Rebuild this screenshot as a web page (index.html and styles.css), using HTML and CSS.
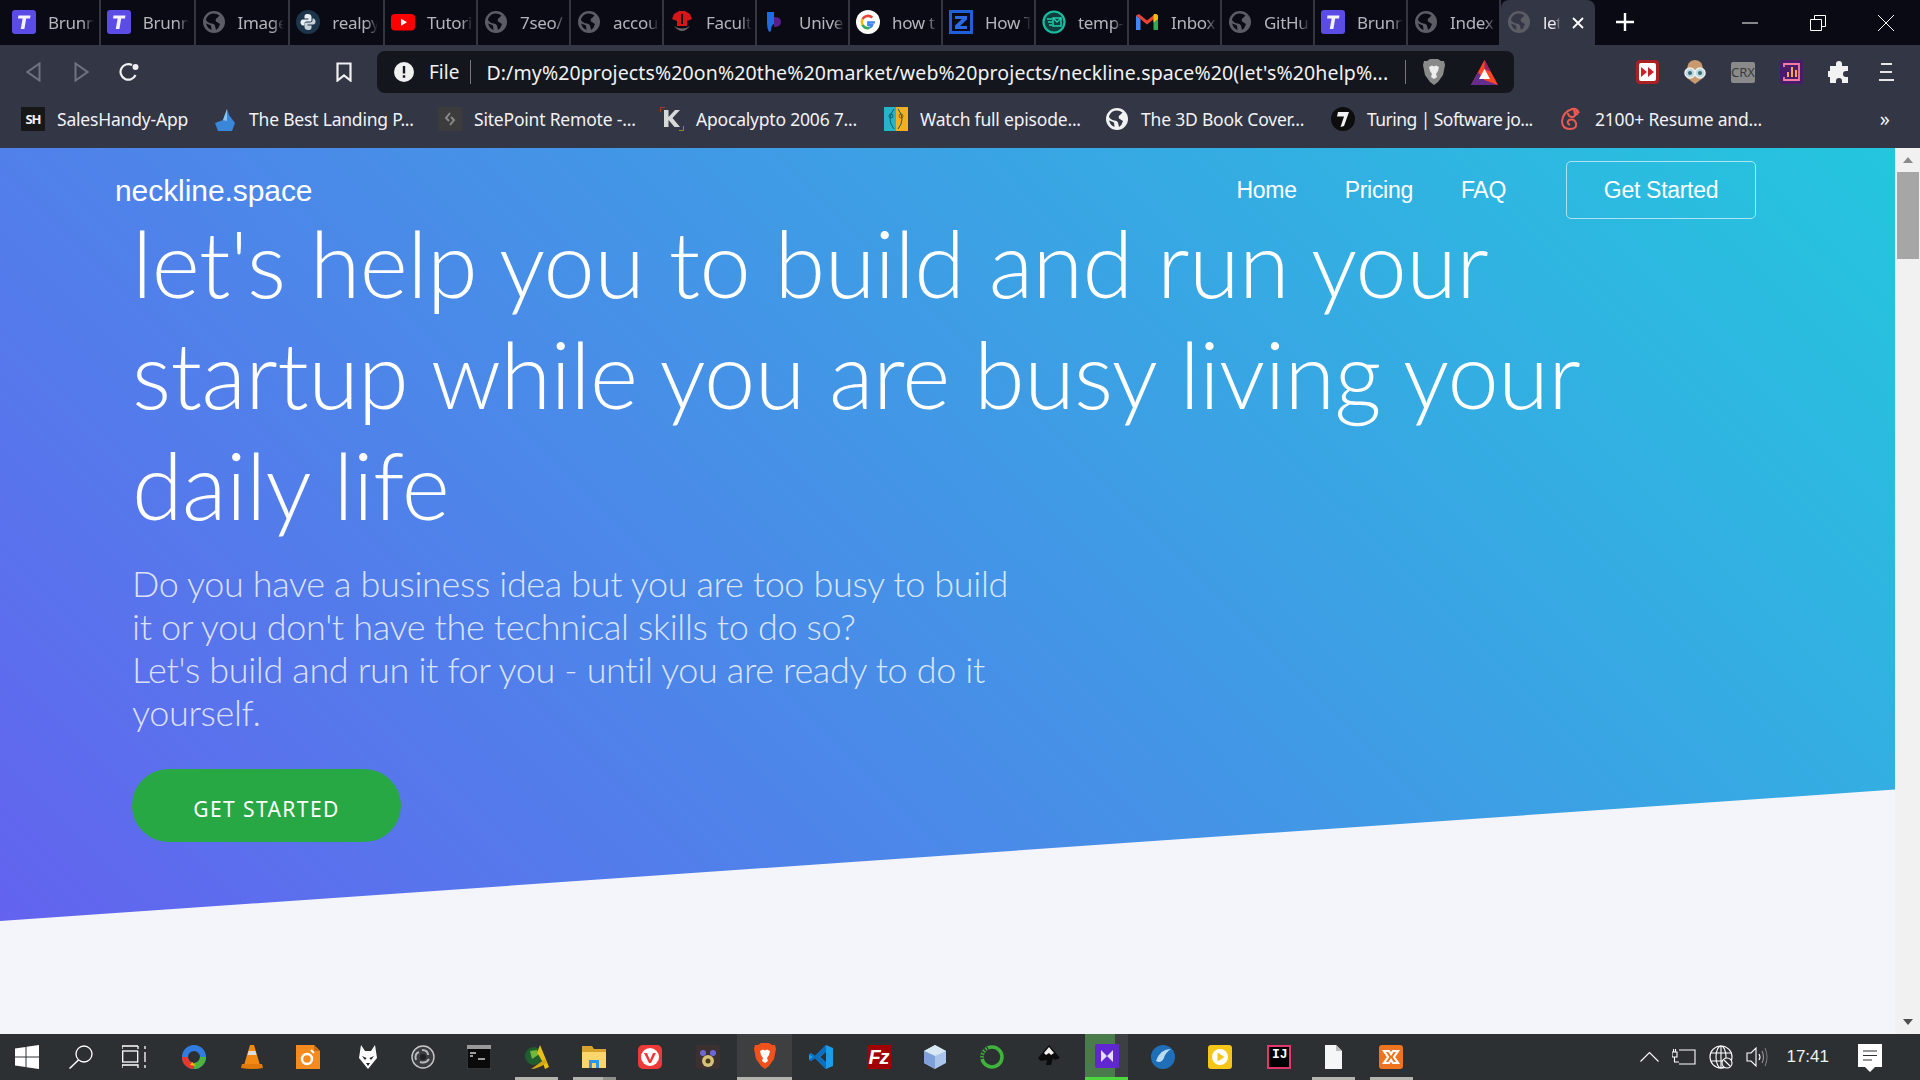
FILE: index.html
```html
<!DOCTYPE html>
<html lang="en">
<head>
  <meta charset="UTF-8" />
  <title>neckline.space</title>
  <link rel="stylesheet" href="styles.css">
</head>
<body>

<svg class="defs" width="0" height="0">
  <symbol id="globe" viewBox="0 0 24 24">
    <path fill-rule="evenodd" d="M12 1a11 11 0 1 0 0 22 11 11 0 0 0 0-22ZM9.500 3.800Q14 3 17.500 5.500L15 8Q13 9 14 11.500L18 14Q17 18 14 20L13 15.500Q12 13.500 9.500 13.500 5 12.500 3.900 9.500 5.500 5 9.500 3.800ZM4 13.500Q7 14.500 9 15.500L9.500 20Q5.500 18.500 4 13.500Z" fill="currentColor"/>
  </symbol>
  <symbol id="tlogo" viewBox="0 0 24 24">
    <rect width="24" height="24" rx="3" fill="#5c4ce6"/>
    <path d="M6.5 5.5H18.5L18 8.5H14.2L12.4 19H8.8L10.6 8.5H6Z" fill="#f4f2ff"/>
  </symbol>
</svg>

<div class="tabstrip">
  <div class="tab"><svg class="tab-icon"><use href="#tlogo"/></svg><span class="tab-title">Brunn</span></div>
  <div class="tab"><svg class="tab-icon"><use href="#tlogo"/></svg><span class="tab-title">Brunn</span></div>
  <div class="tab"><svg class="tab-icon globe"><use href="#globe"/></svg><span class="tab-title">Image</span></div>
  <div class="tab">
    <svg class="tab-icon" viewBox="0 0 24 24"><circle cx="12" cy="12" r="12" fill="#1d3549"/><path d="M12 4C8.5 4 8.5 5.500 8.500 7V8.500H12.500V9.500H7C5 9.500 4.500 11 4.500 12.500S5.500 15.500 7 15.500H8.500V13.500C8.500 12 9.500 11.500 11 11.500H14C15 11.500 15.500 11 15.500 10V7C15.500 5 14 4 12 4Z" fill="#e8eef2"/><path d="M12 20C15.500 20 15.500 18.500 15.500 17V15.500H11.500V14.500H17C19 14.500 19.500 13 19.500 11.500S18.500 8.500 17 8.500H16.500V10.500C16.500 12 14.500 12.500 13 12.500H10C9 12.500 8.500 13 8.500 14V17C8.500 19 10 20 12 20Z" fill="#c7d3db"/></svg>
    <span class="tab-title">realpy</span>
  </div>
  <div class="tab">
    <svg class="tab-icon" viewBox="0 0 24 24"><rect x="0" y="4" width="24" height="16.500" rx="4" fill="#f00"/><path d="M10 8.700 16 12.200 10 15.700Z" fill="#fff"/></svg>
    <span class="tab-title">Tutori</span>
  </div>
  <div class="tab"><svg class="tab-icon globe"><use href="#globe"/></svg><span class="tab-title">7seo/</span></div>
  <div class="tab"><svg class="tab-icon globe"><use href="#globe"/></svg><span class="tab-title">accou</span></div>
  <div class="tab">
    <svg class="tab-icon" viewBox="0 0 24 24"><path d="M4 4 9 1H15L20 4 22 9 17 11V16H7V11L2 9Z" fill="#d5161b"/><path d="M11 4H13V14H11Z" fill="#111"/><path d="M4 16Q12 26 20 16Q12 21 4 16Z" fill="#666"/></svg>
    <span class="tab-title">Facult</span>
  </div>
  <div class="tab">
    <svg class="tab-icon" viewBox="0 0 24 24"><path d="M4 2H11V14Q8 15 8 21L6 22Q4 18 4 14Z" fill="#1f6be0"/><path d="M11 7Q18 7 18 12T11 17Z" fill="#5a1e8c"/></svg>
    <span class="tab-title">Unive</span>
  </div>
  <div class="tab">
    <svg class="tab-icon" viewBox="0 0 24 24"><circle cx="12" cy="12" r="12" fill="#fff"/><path d="M19 12.300H12.200V14.800H16.300C15.800 16.800 14.200 17.800 12.200 17.800" fill="none" stroke="#4285f4" stroke-width="2.200"/><path d="M6.500 9.200A6.300 6.300 0 0 1 16.300 7.600" fill="none" stroke="#ea4335" stroke-width="2.600"/><path d="M6.500 9.200A6.300 6.300 0 0 0 6.500 14.900" fill="none" stroke="#fbbc05" stroke-width="2.600"/><path d="M6.500 14.900A6.300 6.300 0 0 0 13 18" fill="none" stroke="#34a853" stroke-width="2.600"/></svg>
    <span class="tab-title">how t</span>
  </div>
  <div class="tab">
    <svg class="tab-icon" viewBox="0 0 24 24"><path d="M0 0H24V24H0Z" fill="#1f5fd8"/><path d="M3 3H21V21H3Z" fill="#0a0b16"/><path d="M6 6H18V9.500L11 16H18V19H6V15.500L13 9H6Z" fill="#2a6ae8"/></svg>
    <span class="tab-title">How T</span>
  </div>
  <div class="tab">
    <svg class="tab-icon" viewBox="0 0 24 24"><circle cx="12" cy="12" r="10.500" fill="#103e3c" stroke="#17bfa0" stroke-width="2.200"/><path d="M5 9H10M6 12H10M7 15H10" stroke="#1fd0ae" stroke-width="1.500"/><rect x="11" y="8" width="8" height="8" fill="none" stroke="#1fd0ae" stroke-width="1.500"/><path d="M11 8 15 12 19 8" fill="none" stroke="#1fd0ae" stroke-width="1.300"/></svg>
    <span class="tab-title">temp-</span>
  </div>
  <div class="tab">
    <svg class="tab-icon" viewBox="0 0 24 24"><path d="M1 5.500V20H5.500V9Z" fill="#4285f4"/><path d="M23 5.500V20H18.500V9Z" fill="#34a853"/><path d="M1 5.500 4 4 12 10.500 20 4 23 5.500 12 14.500Z" fill="#ea4335"/><path d="M19 4H21.500L23 5.500V9L18.500 12.500V5Z" fill="#fbbc05"/></svg>
    <span class="tab-title">Inbox</span>
  </div>
  <div class="tab"><svg class="tab-icon globe"><use href="#globe"/></svg><span class="tab-title">GitHu</span></div>
  <div class="tab"><svg class="tab-icon"><use href="#tlogo"/></svg><span class="tab-title">Brunn</span></div>
  <div class="tab"><svg class="tab-icon globe"><use href="#globe"/></svg><span class="tab-title">Index</span></div>
  <div class="tab tab-active">
    <svg class="tab-icon globe"><use href="#globe"/></svg><span class="tab-title">let's</span>
    <svg class="tab-close" viewBox="0 0 12 12"><path d="M1 1 11 11M11 1 1 11" stroke="#fff" stroke-width="1.800"/></svg>
  </div>
  <svg class="new-tab" viewBox="0 0 18 18"><path d="M9 0V18M0 9H18" stroke="#fff" stroke-width="2.400"/></svg>
  <div class="window-btns">
    <svg viewBox="0 0 16 16" width="16" height="16"><path d="M0 8H16" stroke="#fff"/></svg>
    <svg viewBox="0 0 16 16" width="16" height="16"><path d="M.5 4.500H11.500V15.500H.5ZM4.500 4.500V.5H15.500V11.500H11.500" fill="none" stroke="#fff"/></svg>
    <svg viewBox="0 0 16 16" width="16" height="16"><path d="M0 0 16 16M16 0 0 16" stroke="#fff"/></svg>
  </div>
</div>

<div class="toolbar">
  <div class="nav-btns">
    <svg viewBox="0 0 15 20" width="15" height="20"><path d="M13.500 1.500V18.500L1.500 10Z" fill="none" stroke="#70737e" stroke-width="2"/></svg>
    <svg viewBox="0 0 15 20" width="15" height="20"><path d="M1.500 1.500V18.500L13.500 10Z" fill="none" stroke="#70737e" stroke-width="2"/></svg>
    <svg viewBox="0 0 20 20" width="20" height="20"><path d="M16.500 13A7.800 7.800 0 1 1 13 3" fill="none" stroke="#f0f0f0" stroke-width="2.200"/><circle cx="16.500" cy="5" r="3" fill="#f0f0f0"/></svg>
  </div>
  <svg class="bookmark-btn" viewBox="0 0 16 20" width="16" height="20"><path d="M1.500 1.500H14.500V18.500L8 13.500 1.500 18.500Z" fill="none" stroke="#f0f0f0" stroke-width="2.200"/></svg>
  <div class="addressbar">
    <svg class="alert-icon" viewBox="0 0 20 20" width="20" height="20"><circle cx="10" cy="10" r="10" fill="#f0f0f0"/><path d="M8.800 4H11.200V11.500H8.800ZM8.800 13.300H11.200V15.800H8.800Z" fill="#14161e"/></svg>
    <span class="scheme">File</span>
    <span class="address-sep"></span>
    <span class="url">D:/my%20projects%20on%20the%20market/web%20projects/neckline.space%20(let's%20help%...</span>
    <span class="address-sep sep-right"></span>
    <svg class="brave-shield" viewBox="0 0 22 26" width="22" height="26"><path d="M4 2 7 0H15L18 2 21 2 22 6 20 16 15 23 11 26 7 23 2 16 0 6 1 2Z" fill="#8a8a8a"/><path d="M6 8 9 6.500 11 7.500 13 6.500 16 8 15 12 13 15 14 18 11 20 8 18 9 15 7 12Z" fill="#eee"/></svg>
    <svg class="bat-icon" viewBox="0 0 27 25" width="27" height="25"><path d="M13.500 0 27 25H0Z" fill="#ff4724"/><path d="M13.500 0 20 12 13.500 9Z" fill="#9e1f63"/><path d="M0 25 7 12 13.500 20 27 25Z" fill="#662d91"/><path d="M13.500 9 19 19H8Z" fill="#fff"/></svg>
  </div>
  <div class="extensions">
    <svg viewBox="0 0 23 24" width="23" height="24"><rect width="23" height="24" rx="4" fill="#a92025"/><rect x="3" y="3" width="17" height="18" rx="2" fill="#fff"/><path d="M5 7 11 12 5 17ZM12 7 18 12 12 17Z" fill="#c8232a"/></svg>
    <svg viewBox="0 0 22 24" width="22" height="24"><path d="M3 11Q3 0 11 0T19 11V18L11 24 3 18Z" fill="#c99a6e"/><circle cx="6" cy="13" r="5" fill="#bcd9dd" stroke="#eee" stroke-width="1.500"/><circle cx="16" cy="13" r="5" fill="#bcd9dd" stroke="#eee" stroke-width="1.500"/><circle cx="6" cy="13" r="2" fill="#3b6b78"/><circle cx="16" cy="13" r="2" fill="#3b6b78"/></svg>
    <span class="crx">CRX</span>
    <svg viewBox="0 0 23 24" width="23" height="24"><rect width="23" height="24" rx="3" fill="#4c1a6b"/><path d="M4 7V4H19V20H4V17" fill="none" stroke="#f07ca6" stroke-width="1.800"/><path d="M8 17V12M12 17V7M16 17V10" stroke="#f4a65c" stroke-width="2"/></svg>
    <svg viewBox="0 0 22 22" width="22" height="22"><path d="M8 3A3 3 0 0 1 14 3V5H20V10H18A3 3 0 0 0 18 16H20V22H14V20A3 3 0 0 0 8 20V22H2V16H0A3 3 0 0 1 0 10H2V5H8Z" fill="#f2f2f2"/></svg>
    <svg class="menu-btn" viewBox="0 0 15 20" width="15" height="20"><path d="M2 2H13M1 10H13M0 18H15" stroke="#e6e6e6" stroke-width="2.200"/></svg>
  </div>
</div>

<div class="bookmarks">
  <div class="bm bm-first"><span class="bm-box sh">SH</span><span>SalesHandy-App</span></div>
  <div class="bm bm-a">
    <svg viewBox="0 0 20 24" width="20" height="24"><path d="M0 16 8 13 12 2 14 8 20 16 17 24H3Z" fill="#3a87da"/><path d="M8 13 12 2 12 14Z" fill="#8cc2f2"/></svg>
    <span>The Best Landing P...</span>
  </div>
  <div class="bm bm-b">
    <svg viewBox="0 0 24 24" width="24" height="24"><rect width="24" height="24" fill="#3c3c3c"/><path d="M12 6 8 11 11 14M13 10 16 13 12 18" fill="none" stroke="#8a8a8a" stroke-width="2"/></svg>
    <span>SitePoint Remote -...</span>
  </div>
  <div class="bm bm-c">
    <svg viewBox="0 0 24 24" width="24" height="24"><path d="M.5 5V.5H5" fill="none" stroke="#b53028"/><path d="M23.500 19V23.500H19" fill="none" stroke="#8f8b2c"/><path d="M4 3H8.500V10L15 3H20L12.500 11 20 20H14.500L8.500 13V20H4Z" fill="#d8d8d8"/></svg>
    <span>Apocalypto 2006 7...</span>
  </div>
  <div class="bm bm-d">
    <svg viewBox="0 0 24 24" width="24" height="24"><rect width="12" height="24" fill="#27b4c8"/><rect x="12" width="12" height="24" fill="#f4b01e"/><circle cx="7" cy="9" r="2" fill="none" stroke="#0c5f70"/><circle cx="17" cy="9" r="2" fill="none" stroke="#8a5e00"/><path d="M10 2Q2 12 10 22M14 2Q22 12 14 22" fill="none" stroke="#0c5f70"/></svg>
    <span>Watch full episode...</span>
  </div>
  <div class="bm bm-e"><svg class="bm-globe"><use href="#globe"/></svg><span>The 3D Book Cover...</span></div>
  <div class="bm bm-f">
    <svg viewBox="0 0 24 24" width="24" height="24"><circle cx="12" cy="12" r="12" fill="#0d0d0d"/><path d="M7 5H18L13 19 9.500 20 13 9.500H6Z" fill="#f2f2f2"/></svg>
    <span>Turing | Software jo...</span>
  </div>
  <div class="bm bm-g">
    <svg viewBox="0 0 22 24" width="22" height="24" fill="none" stroke="#ea5a52" stroke-width="2"><path d="M19 6Q17 1 12 2 3 5 2 14 2 22 10 22 17 22 16 16 14 11 9 13 6 16 10 18"/><path d="M13 2Q18 8 13 10 8 10 8 6"/><circle cx="16" cy="6" r="1.500"/></svg>
    <span>2100+ Resume and...</span>
  </div>
  <span class="bm-more">»</span>
</div>

<div class="viewport">
  <main class="page">
    <section class="hero">
      <nav class="topnav">
        <a class="brand">neckline.space</a>
        <div class="nav-links">
          <a>Home</a>
          <a>Pricing</a>
          <a>FAQ</a>
          <a class="nav-cta">Get Started</a>
        </div>
      </nav>
      <div class="hero-body">
        <h1>let's help you to build and run your startup while you are busy living your daily life</h1>
        <p>Do you have a business idea but you are too busy to build it or you don't have the technical skills to do so?<br>Let's build and run it for you - until you are ready to do it yourself.</p>
        <a class="hero-btn">GET STARTED</a>
      </div>
    </section>
  </main>
  <div class="scrollbar">
    <svg class="arrow" viewBox="0 0 10 6" width="10" height="6"><path d="M5 0 10 6H0Z" fill="#8a8a8a"/></svg>
    <div class="thumb"></div>
    <svg class="arrow arrow-down" viewBox="0 0 10 6" width="10" height="6"><path d="M5 6 10 0H0Z" fill="#505050"/></svg>
  </div>
</div>

<footer class="taskbar">
  <svg class="tb-win" viewBox="0 0 24 24" width="24" height="24"><path d="M0 3.500 10.500 2V11.500H0ZM11.500 1.800 24 0V11.500H11.500ZM0 12.500H10.500V22L0 20.500ZM11.500 12.500H24V24L11.500 22.200Z" fill="#fff"/></svg>
  <svg class="tb-search" viewBox="0 0 24 24" width="24" height="24"><circle cx="15" cy="9" r="8" fill="none" stroke="#fff" stroke-width="1.300"/><path d="M9.500 15 .5 23.500" stroke="#fff" stroke-width="1.500"/></svg>
  <svg class="tb-view" viewBox="0 0 25 24" width="25" height="24" fill="none" stroke="#fff" stroke-width="1.300"><path d="M0 4V1M16 1V4M0 1H16"/><rect x=".7" y="6" width="15" height="11"/><path d="M0 23V20H16V23M23 1V4M23 7V17M23 20V23"/></svg>
  <svg class="tb-a" viewBox="0 0 24 24" width="24" height="24"><circle cx="12" cy="12" r="9" fill="none" stroke="#2f7de1" stroke-width="6"/><path d="M3 12A9 9 0 0 0 12 21" fill="none" stroke="#e8372c" stroke-width="6"/><path d="M12 21A9 9 0 0 0 21 12" fill="none" stroke="#4db33d" stroke-width="6"/><path d="M8 20 14 21 10 17Z" fill="#fbbc05"/></svg>
  <svg class="tb-b" viewBox="0 0 22 24" width="22" height="24"><path d="M9 0H13L19 20H3Z" fill="#f08a12"/><path d="M7.600 6H14.400L15.500 10H6.500Z" fill="#ddd"/><path d="M1 19H21L22 23Q11 25 0 23Z" fill="#e07b0a"/></svg>
  <svg class="tb-c" viewBox="0 0 24 24" width="24" height="24"><path d="M0 0H18L24 6V24H0Z" fill="#f58a1f"/><path d="M18 0 24 6H18Z" fill="#c66f15"/><circle cx="11" cy="14" r="5" fill="none" stroke="#fff" stroke-width="2.500"/><path d="M15 5 18 8" stroke="#fff" stroke-width="2"/></svg>
  <svg class="tb-d" viewBox="0 0 24 24" width="24" height="24"><path d="M5 0 9 6H15L19 0 21 13 12 24 3 13Z" fill="#fff"/><path d="M6 11 10.500 13 9 15ZM18 11 13.500 13 15 15ZM10 18H14L12 21Z" fill="#222"/></svg>
  <svg class="tb-e" viewBox="0 0 24 24" width="24" height="24"><circle cx="12" cy="12" r="11" fill="#3a3d3f" stroke="#c8c8c8" stroke-width="1.400"/><path d="M11 5Q17 5 17 10M18 14Q15 19 9 17M5 15Q3 9 8 7" fill="none" stroke="#b8b8b8" stroke-width="2"/><circle cx="12" cy="12" r="3" fill="#1e2022"/></svg>
  <svg class="tb-f" viewBox="0 0 24 24" width="24" height="24"><rect width="24" height="24" fill="#0a0a0a" stroke="#5c5c5c"/><rect width="24" height="4" fill="#9a9a9a"/><path d="M3 8H9M3 11H6M11 14H18" stroke="#d0d0d0" stroke-width="1.500"/></svg>
  <span class="tb-slot tb-open tb-g"><svg viewBox="0 0 24 24" width="24" height="24"><circle cx="9" cy="11" r="9" fill="#1f5f2f"/><path d="M5 6 12 5 13 10 7 14Z" fill="#6fba3d"/><path d="M15 0Q20 12 24 22L20 24Q17 14 12 8Z" fill="#e8c018"/><path d="M6 24Q12 20 20 14L22 18Q12 24 6 24Z" fill="#d8a810"/></svg></span>
  <span class="tb-slot tb-open tb-stacked tb-h"><svg viewBox="0 0 24 24" width="24" height="24"><path d="M0 1H10L12 4H24V8H0Z" fill="#d8a32c"/><path d="M0 7H24V23H0Z" fill="#fbd66a"/><path d="M7 23V15H17V23H14V18H10V23Z" fill="#2e96e6"/></svg></span>
  <span class="tb-slot tb-i"><svg viewBox="0 0 24 24" width="24" height="24"><rect width="24" height="24" rx="5" fill="#ef3939"/><circle cx="12" cy="12" r="9" fill="#fff"/><path d="M6 8H9L12 15 15 8H18L13 18H11Z" fill="#ef3939"/></svg></span>
  <svg class="tb-j" viewBox="0 0 24 24" width="24" height="24"><rect width="24" height="24" rx="3" fill="#3d3030"/><circle cx="7" cy="8" r="3" fill="#6d68d8"/><circle cx="17" cy="8" r="3" fill="#6d68d8"/><circle cx="12" cy="16" r="6" fill="#d6c27a"/><circle cx="12" cy="16" r="2.500" fill="#4a3a18"/></svg>
  <span class="tb-active-brave"><svg viewBox="0 0 22 26" width="22" height="26"><path d="M4 2 7 0H15L18 2 21 2 22 6 20 16 15 23 11 26 7 23 2 16 0 6 1 2Z" fill="#f1511b"/><path d="M6 8 9 6.500 11 7.500 13 6.500 16 8 15 12 13 15 14 18 11 20 8 18 9 15 7 12Z" fill="#fff"/></svg></span>
  <svg class="tb-k" viewBox="0 0 24 24" width="24" height="24"><path d="M17 0 24 3V21L17 24 6 13 2 16 0 14.500V9.500L2 8 6 11Z" fill="#1f9ce8"/><path d="M17 0V7L10 12 17 17V24L6 13 2 16 0 14.500 4 12 0 9.500 2 8 6 11Z" fill="#0a6fc0"/><path d="M17 7 11 12 17 17Z" fill="#2d3033"/></svg>
  <span class="tb-fz">Fz</span>
  <svg class="tb-l" viewBox="0 0 22 24" width="22" height="24"><path d="M11 0 22 6V18L11 24 0 18V6Z" fill="#a9c6ea"/><path d="M11 0 22 6 11 11 0 6Z" fill="#d9e9f4"/><path d="M11 11V24L0 18V6Z" fill="#7ea1da"/></svg>
  <svg class="tb-m" viewBox="0 0 24 24" width="24" height="24"><circle cx="12" cy="12" r="10" fill="none" stroke="#3fb43a" stroke-width="3.500"/><path d="M2 14A10 10 0 0 1 8 3" fill="none" stroke="#2d3033" stroke-width="3.500" stroke-dasharray="1.500 1.500"/></svg>
  <svg class="tb-n" viewBox="0 0 22 24" width="22" height="24"><path d="M11 0 22 13 17 15 15 13 13 20H8L9 15 3 16 0 13Z" fill="#0b0b0b"/><path d="M11 2 16 8 13 10 11 8 8 10 6 8Z" fill="#f0f0f0"/></svg>
  <span class="tb-active-vs"><svg viewBox="0 0 24 24" width="24" height="24"><rect width="24" height="24" rx="2" fill="#5f27cd"/><path d="M6 6 12 12 6 18ZM18 6V18L12 12Z" fill="#e7dcff"/></svg></span>
  <svg class="tb-o" viewBox="0 0 24 24" width="24" height="24"><circle cx="12" cy="12" r="12" fill="#1f6fb8"/><path d="M5 16Q9 4 20 4 14 8 13 13 10 19 5 16Z" fill="#b8dcf2"/></svg>
  <svg class="tb-p" viewBox="0 0 24 24" width="24" height="24"><rect width="24" height="24" rx="3" fill="#f5c518"/><circle cx="12" cy="12" r="8" fill="#fff"/><path d="M9.500 7.500 16.500 12 9.500 16.500Z" fill="#f5c518"/></svg>
  <span class="tb-ij">IJ</span>
  <span class="tb-slot tb-open tb-q"><svg viewBox="0 0 17 24" width="17" height="24"><path d="M0 0H11L17 6V24H0Z" fill="#f4f6f8"/><path d="M11 0 17 6H11Z" fill="#bcbcbc"/></svg></span>
  <span class="tb-slot tb-open tb-r"><svg viewBox="0 0 24 24" width="24" height="24"><rect width="24" height="24" rx="3" fill="#ef7420"/><path d="M5 6H10L12 9 14 6H19L15 12 19 18H14L12 15 10 18H5L9 12Z" fill="none" stroke="#fff" stroke-width="2.200"/></svg></span>
  <div class="tray">
    <svg viewBox="0 0 19 10" width="19" height="10"><path d="M.5 9.500 9.500 .5 18.500 9.500" fill="none" stroke="#fff" stroke-width="1.100"/></svg>
    <svg class="tray-plug" viewBox="0 0 24 18" width="24" height="18" fill="none" stroke="#fff" stroke-width="1.100"><path d="M7 2H23V16H7M0 4H5V9H0ZM1.500 4V1M3.500 4V1M2.500 9V14H7"/></svg>
    <svg class="tray-net" viewBox="0 0 24 24" width="24" height="24" fill="none" stroke="#fff" stroke-width="1.100"><circle cx="12" cy="12" r="11"/><ellipse cx="12" cy="12" rx="5" ry="11"/><path d="M1 8H23M1 16H23M12 1V23"/><circle cx="18" cy="18" r="5" fill="#2d3033"/><path d="M15 15 21 21"/></svg>
    <svg class="tray-vol" viewBox="0 0 22 24" width="22" height="24" fill="none" stroke="#fff" stroke-width="1.100"><path d="M1 8H5L10 3V21L5 16H1Z"/><path d="M13 9Q15 12 13 15" /><path d="M16 6Q19 12 16 18" stroke="#999"/><path d="M19 3Q23 12 19 21" stroke="#777"/></svg>
    <span class="clock">17:41</span>
    <svg class="tray-note" viewBox="0 0 24 30" width="24" height="30"><path d="M0 0H24V23H17L12 28 7 23H0Z" fill="#fff"/><path d="M5 7H19M5 11.500H19M5 16H14" stroke="#2d3033" stroke-width="1.200"/></svg>
  </div>
</footer>

</body>
</html>
```
FILE: styles.css
```css
* {
  box-sizing: border-box;
}

html, body {
  height: 100%;
}

body {
  margin: 0;
  display: flex;
  flex-direction: column;
  height: 1080px;
  overflow: hidden;
  font-family: "Noto Sans", sans-serif;
  color: #fff;
  background: #f4f5fb;
}

.defs {
  position: absolute;
}

svg {
  display: block;
  flex: none;
}

/* tab strip */
.tabstrip {
  display: flex;
  align-items: stretch;
  height: 45px;
  padding-left: 6px;
  background: #0a0a14;
}

.tab {
  display: flex;
  align-items: center;
  gap: 12px;
  width: 93px;
  padding-left: 6px;
  border-right: 2px solid #33353f;
}

.tab:nth-child(-n+4) {
  width: 94.75px;
}

.tab-icon {
  width: 24px;
  height: 24px;
  margin-top: -1px;
}

.tab-icon.globe {
  color: #5b5d65;
}

.tab-title {
  width: 46px;
  overflow: hidden;
  white-space: nowrap;
  font-size: 17px;
  letter-spacing: -0.3px;
  color: #b4b5ba;
  -webkit-mask-image: linear-gradient(to right, #000 75%, transparent);
  mask-image: linear-gradient(to right, #000 75%, transparent);
}

.tab-active {
  position: relative;
  border-right: 0;
  border-radius: 8px 8px 0 0;
  background: #333645;
  gap: 12px;
  width: 94px;
}

.tab-active .tab-title {
  width: 17px;
  color: #e8e8ea;
}

.tab-close {
  width: 12px;
  height: 12px;
}

.new-tab {
  width: 18px;
  height: 18px;
  margin: 13px 0 0 21px;
}

.window-btns {
  display: flex;
  align-items: center;
  gap: 52px;
  margin-left: auto;
  padding-right: 26px;
}

/* toolbar */
.toolbar {
  display: flex;
  align-items: center;
  height: 48px;
  padding-top: 6px;
  background: #333645;
}

.nav-btns {
  display: flex;
  align-items: center;
  gap: 33px;
  padding-left: 26px;
}

.nav-btns svg:last-child {
  margin-left: -3px;
}

.bookmark-btn {
  margin-left: 197px;
}

.addressbar {
  display: flex;
  align-items: center;
  width: 1137px;
  height: 42px;
  margin-left: 25px;
  padding-left: 17px;
  border-radius: 8px;
  background: #14161e;
}

.scheme {
  margin-left: 15px;
  font-size: 19px;
  color: #f2f2f2;
}

.address-sep {
  width: 1px;
  height: 24px;
  margin: 0 15px 0 11px;
  background: #777;
}

.url {
  width: 905px;
  white-space: nowrap;
  font-size: 19.5px;
  letter-spacing: 0.12px;
  color: #f2f2f2;
}

.sep-right {
  margin: 0 17px 0 14px;
}

.bat-icon {
  margin-left: 26px;
}

.extensions {
  display: flex;
  align-items: center;
  gap: 25px;
  margin-left: 122px;
}

.menu-btn {
  margin-left: 4px;
}

.crx {
  width: 24px;
  height: 21px;
  background: #8a8a8a;
  border-radius: 2px;
  font-size: 13px;
  line-height: 21px;
  text-align: center;
  color: #3a3a3a;
}

/* bookmarks */
.bookmarks {
  display: flex;
  align-items: center;
  height: 55px;
  padding: 0 0 4px 21px;
  background: #333645;
  font-size: 17.5px;
  color: #f2f2f4;
}

.bm {
  display: flex;
  align-items: center;
  gap: 12px;
  white-space: nowrap;
  letter-spacing: -0.2px;
}

.bm-first { width: 194px; }
.bm-a { width: 223px; gap: 14px; }
.bm-b { width: 222px; }
.bm-c { width: 224px; }
.bm-d { width: 221px; }
.bm-e { width: 226px; }
.bm-f { width: 229px; letter-spacing: -0.55px; }
.bm-g { gap: 13px; }

.bm-box {
  width: 24px;
  height: 24px;
  text-align: center;
  line-height: 24px;
}

.sh {
  background: #171717;
  font-size: 13px;
  font-weight: 700;
  letter-spacing: -1px;
}

.bm-globe {
  width: 24px;
  height: 24px;
  color: #f2f2f2;
}

.bm-more {
  margin-left: auto;
  padding-right: 30px;
  font-size: 20px;
}

/* page */
.viewport {
  display: flex;
  flex: 1;
  min-height: 0;
}

.page {
  flex: 1;
  min-width: 0;
  overflow: hidden;
  background: #f4f5fb;
}

.hero {
  height: 773px;
  background: linear-gradient(45deg, #6363ef, #24c6de);
  clip-path: polygon(0 0, 100% 0, 100% 83%, 0 100%);
}

.topnav {
  display: flex;
  align-items: center;
  justify-content: space-between;
  padding: 13px 139px 0 115px;
  font-family: "Liberation Sans", sans-serif;
}

.brand {
  padding-top: 2px;
  font-size: 30px;
  letter-spacing: -0.07px;
}

.nav-links {
  display: flex;
  align-items: center;
  gap: 48px;
  font-size: 23px;
  letter-spacing: -0.3px;
}

.nav-cta {
  width: 190px;
  height: 58px;
  margin-left: 12px;
  border: 1px solid rgba(255, 255, 255, 0.6);
  border-radius: 5px;
  line-height: 56px;
  text-align: center;
}

.hero-body {
  padding: 0 0 0 132px;
}

h1 {
  margin: -12px 0 0;
  max-width: 1500px;
  font-family: "Lato", sans-serif;
  font-size: 92px;
  font-weight: 300;
  letter-spacing: -0.6px;
  line-height: 111px;
}

.hero-body p {
  margin: 22px 0 0;
  width: 890px;
  font-family: "Lato", sans-serif;
  font-size: 36px;
  font-weight: 300;
  letter-spacing: -0.36px;
  line-height: 43px;
  color: rgba(255, 255, 255, 0.8);
}

.hero-btn {
  display: flex;
  align-items: center;
  justify-content: center;
  width: 269px;
  height: 73px;
  margin-top: 35px;
  padding-top: 7px;
  border-radius: 37px;
  background: #28a745;
  font-size: 21px;
  letter-spacing: 1.4px;
}

/* scrollbar */
.scrollbar {
  display: flex;
  flex-direction: column;
  align-items: center;
  width: 25px;
  padding-top: 9px;
  background: #f1f1f1;
}

.thumb {
  width: 22px;
  height: 87px;
  margin-top: 9px;
  background: #a6a6a6;
}

.arrow-down {
  margin-top: auto;
  margin-bottom: 9px;
}

/* taskbar */
.taskbar {
  display: flex;
  align-items: center;
  height: 46px;
  padding-left: 15px;
  background: #2d3033;
}

.tb-search { margin-left: 30px; }
.tb-view { margin-left: 29px; }
.tb-a { margin-left: 35px; }
.tb-b { margin-left: 35px; }
.tb-c { margin-left: 33px; }
.tb-d { margin-left: 36px; }
.tb-e { margin-left: 31px; }
.tb-f { margin-left: 32px; }
.tb-g { margin-left: 33.5px; }
.tb-h { margin-left: 33.5px; }
.tb-i { margin-left: 32px; }
.tb-j { margin-left: 33.5px; }
.tb-k { margin-left: 16.5px; }
.tb-fz { margin-left: 34px; }
.tb-l { margin-left: 33.5px; }
.tb-m { margin-left: 34px; }
.tb-n { margin-left: 34px; }
.tb-o { margin-left: 23px; }
.tb-p { margin-left: 33px; }
.tb-ij { margin-left: 35px; }
.tb-q { margin-left: 34px; }
.tb-r { margin-left: 37px; }

.tb-slot {
  position: relative;
  display: flex;
  align-items: center;
  align-self: stretch;
}

/* running app marker */
.tb-open::after {
  content: "";
  position: absolute;
  left: 50%;
  bottom: 0;
  width: 43px;
  height: 3px;
  margin-left: -21.5px;
  background: #b4b4ae;
}

.tb-stacked::after {
  background: linear-gradient(to right, #b4b4ae 70%, #8f8f8b 70%);
}

.tb-active-brave {
  display: flex;
  align-items: center;
  justify-content: center;
  align-self: stretch;
  width: 55px;
  margin-left: 17.5px;
  background: #3d3f41;
  border-bottom: 3px solid #b4b4ae;
}

.tb-active-vs {
  display: flex;
  align-items: center;
  justify-content: center;
  align-self: stretch;
  width: 43px;
  margin-left: 25px;
  background: linear-gradient(to right, #4a7b4a 70%, #3d4042 70%);
  border-bottom: 3px solid #4cd83c;
}

.tb-fz {
  width: 24px;
  height: 24px;
  background: #a00000;
  font-family: "Liberation Sans", sans-serif;
  font-size: 20px;
  font-style: italic;
  font-weight: 700;
  line-height: 24px;
  text-align: center;
  letter-spacing: -1px;
}

.tb-ij {
  width: 24px;
  height: 24px;
  padding-left: 3px;
  border: 2px solid #e0386c;
  background: #000;
  font-family: "Liberation Mono", monospace;
  font-size: 13px;
  font-weight: 700;
  line-height: 15px;
}

.tray {
  display: flex;
  align-items: center;
  gap: 13px;
  margin-left: auto;
  padding-right: 38px;
}

.clock {
  margin-left: 5px;
  font-family: "Liberation Sans", sans-serif;
  font-size: 17px;
  color: #f0f0f0;
}

.tray-note {
  margin: 3px 0 0 16px;
}
```
